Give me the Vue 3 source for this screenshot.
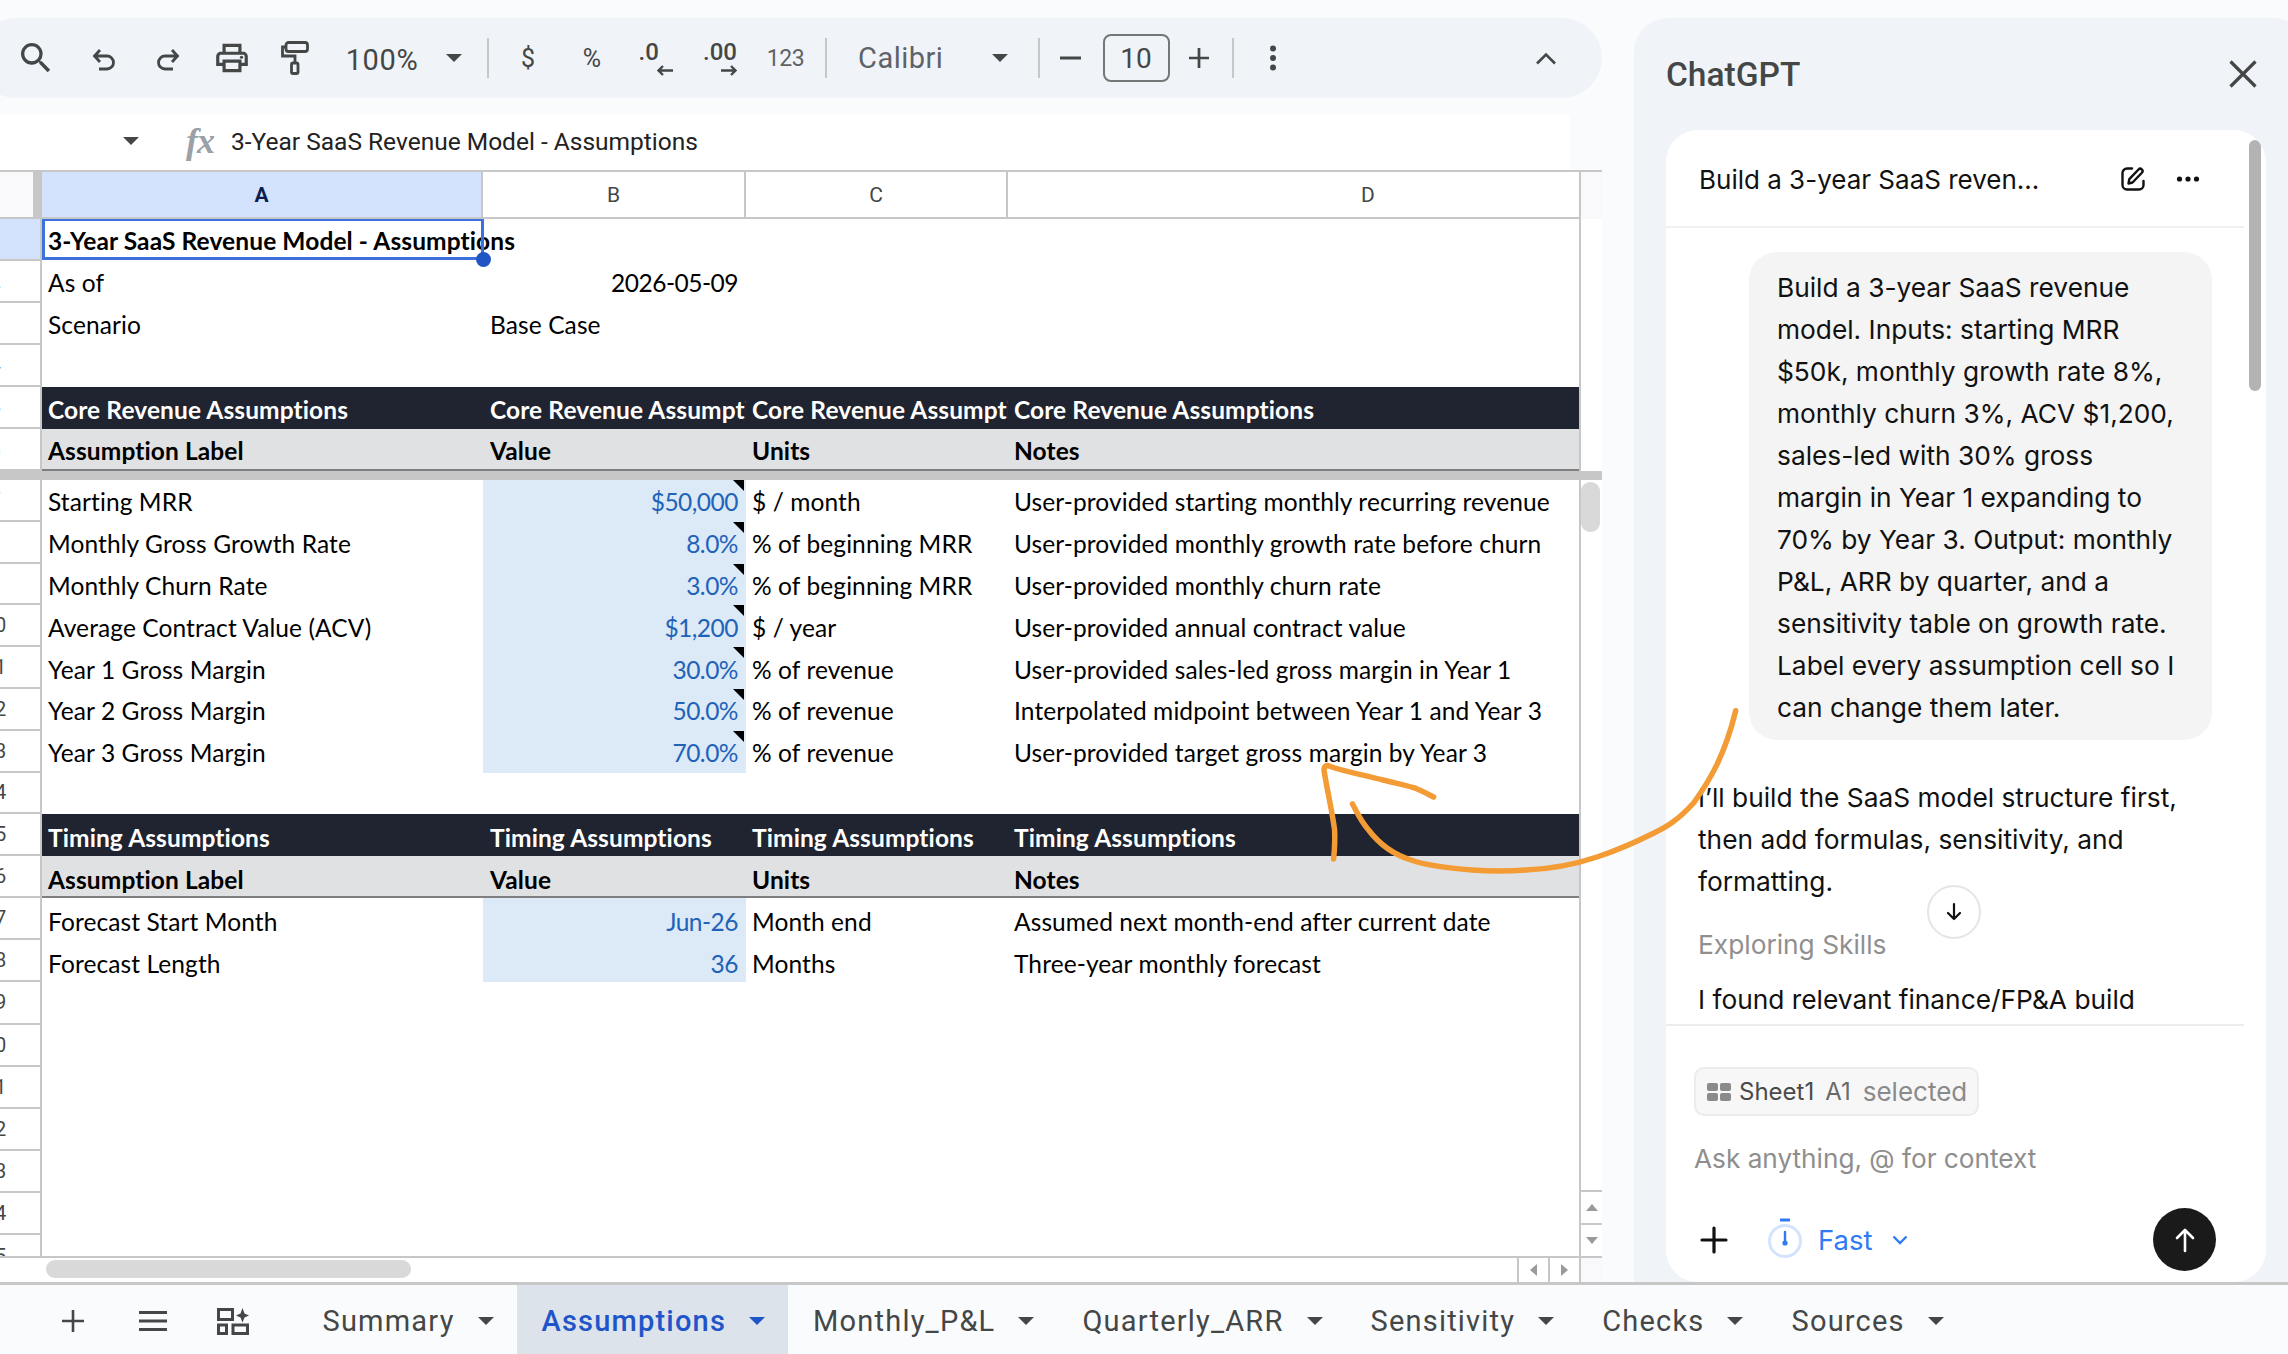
<script setup>
const tabs = [
  { name: 'Summary' },
  { name: 'Assumptions', active: true },
  { name: 'Monthly_P&L' },
  { name: 'Quarterly_ARR' },
  { name: 'Sensitivity' },
  { name: 'Checks' },
  { name: 'Sources' }
]

const columns = [
  { key: 'A', active: true },
  { key: 'B' },
  { key: 'C' },
  { key: 'D' }
]

const promptLines = [
  'Build a 3-year SaaS revenue',
  'model. Inputs: starting MRR',
  '$50k, monthly growth rate 8%,',
  'monthly churn 3%, ACV $1,200,',
  'sales-led with 30% gross',
  'margin in Year 1 expanding to',
  '70% by Year 3. Output: monthly',
  'P&L, ARR by quarter, and a',
  'sensitivity table on growth rate.',
  'Label every assumption cell so I',
  'can change them later.'
]

const replyLines = [
  'I’ll build the SaaS model structure first,',
  'then add formulas, sensitivity, and',
  'formatting.'
]

const sections = [
  {
    cls: 'frozen',
    rows: [
      { n: 1, a: '3-Year SaaS Revenue Model - Assumptions', type: 'title', selected: true },
      { n: 2, a: 'As of', b: '2026-05-09', num: true },
      { n: 3, a: 'Scenario', b: 'Base Case' },
      { n: 4 },
      { n: 5, a: 'Core Revenue Assumptions', b: 'Core Revenue Assumptions', c: 'Core Revenue Assumptions', d: 'Core Revenue Assumptions', type: 'band' },
      { n: 6, a: 'Assumption Label', b: 'Value', c: 'Units', d: 'Notes', type: 'head' }
    ]
  },
  {
    cls: 'body',
    rows: [
      { n: 7, a: 'Starting MRR', b: '$50,000', c: '$ / month', d: 'User-provided starting monthly recurring revenue', input: true, note: true },
      { n: 8, a: 'Monthly Gross Growth Rate', b: '8.0%', c: '% of beginning MRR', d: 'User-provided monthly growth rate before churn', input: true, note: true },
      { n: 9, a: 'Monthly Churn Rate', b: '3.0%', c: '% of beginning MRR', d: 'User-provided monthly churn rate', input: true, note: true },
      { n: 10, a: 'Average Contract Value (ACV)', b: '$1,200', c: '$ / year', d: 'User-provided annual contract value', input: true, note: true },
      { n: 11, a: 'Year 1 Gross Margin', b: '30.0%', c: '% of revenue', d: 'User-provided sales-led gross margin in Year 1', input: true, note: true },
      { n: 12, a: 'Year 2 Gross Margin', b: '50.0%', c: '% of revenue', d: 'Interpolated midpoint between Year 1 and Year 3', input: true, note: true },
      { n: 13, a: 'Year 3 Gross Margin', b: '70.0%', c: '% of revenue', d: 'User-provided target gross margin by Year 3', input: true, note: true },
      { n: 14 },
      { n: 15, a: 'Timing Assumptions', b: 'Timing Assumptions', c: 'Timing Assumptions', d: 'Timing Assumptions', type: 'band' },
      { n: 16, a: 'Assumption Label', b: 'Value', c: 'Units', d: 'Notes', type: 'head' }
    ]
  },
  {
    cls: 'tail',
    rows: [
      { n: 17, a: 'Forecast Start Month', b: 'Jun-26', c: 'Month end', d: 'Assumed next month-end after current date', input: true },
      { n: 18, a: 'Forecast Length', b: '36', c: 'Months', d: 'Three-year monthly forecast', input: true },
      { n: 19 }, { n: 20 }, { n: 21 }, { n: 22 }, { n: 23 }, { n: 24 }, { n: 25 }
    ]
  }
]
</script>

<template>
  <div class="app">
    <div class="main">
      <div class="sheet">
        <div class="toolbar">
          <span class="slot">
            <svg width="40" height="40" viewBox="0 0 24 24" fill="#444746"><path d="M15.5 14h-.79l-.28-.27A6.471 6.471 0 0 0 16 9.5 6.5 6.5 0 1 0 9.5 16c1.61 0 3.09-.59 4.23-1.57l.27.28v.79l5 4.99L20.49 19l-4.99-5zm-6 0C7.01 14 5 11.99 5 9.5S7.01 5 9.5 5 14 7.01 14 9.5 11.99 14 9.5 14z"/></svg>
          </span>
          <span class="slot down">
            <svg width="26" height="24" viewBox="0 0 26 24" fill="none" stroke="#444746" stroke-width="2.8"><path d="M9 2 3.5 8 9 14M3.5 8H16a6.5 6.5 0 0 1 0 13H8"/></svg>
          </span>
          <span class="slot down">
            <svg width="26" height="24" viewBox="0 0 26 24" fill="none" stroke="#444746" stroke-width="2.8"><path d="M17 2l5.5 6L17 14M22.5 8H10a6.5 6.5 0 0 0 0 13h8"/></svg>
          </span>
          <span class="slot">
            <svg width="38" height="38" viewBox="0 0 24 24" fill="#444746"><path d="M19 8h-1V3H6v5H5c-1.66 0-3 1.34-3 3v6h4v4h12v-4h4v-6c0-1.66-1.34-3-3-3zM8 5h8v3H8V5zm8 12v2H8v-4h8v2zm2-2v-2H6v2H4v-4c0-.55.45-1 1-1h14c.55 0 1 .45 1 1v4h-2z"/><circle cx="18" cy="11.5" r="1"/></svg>
          </span>
          <span class="slot">
            <svg width="28" height="34" viewBox="0 0 28 34" fill="none" stroke="#444746" stroke-width="2.8"><rect x="5" y="1.5" width="21.5" height="9" rx="2.5"/><path d="M5 6H1.5v9H14v7"/><rect x="10.5" y="22" width="6.5" height="10.5" rx="1.5"/></svg>
          </span>
          <span class="slot zoom-text">100%</span>
          <span class="slot"><i class="tri"></i></span>
          <span class="slot"><i class="sep"></i></span>
          <span class="slot glyph">$</span>
          <span class="slot glyph">%</span>
          <span class="slot">
            <span class="dec">
              <b>.0</b>
              <svg width="16" height="11" viewBox="0 0 16 11" fill="none" stroke="#444746" stroke-width="2.4"><path d="M6 1 1.5 5.5 6 10M1.5 5.5H16"/></svg>
            </span>
          </span>
          <span class="slot">
            <span class="dec">
              <b>.00</b>
              <svg width="16" height="11" viewBox="0 0 16 11" fill="none" stroke="#444746" stroke-width="2.4"><path d="M10 1l4.5 4.5L10 10M14.5 5.5H0"/></svg>
            </span>
          </span>
          <span class="slot num-fmt">123</span>
          <span class="slot"><i class="sep"></i></span>
          <span class="slot font-name">Calibri</span>
          <span class="slot"><i class="tri"></i></span>
          <span class="slot"><i class="sep"></i></span>
          <span class="slot">
            <svg width="22" height="22" viewBox="0 0 22 22" fill="#444746"><rect y="9.5" width="21" height="3"/></svg>
          </span>
          <span class="slot"><span class="size-box">10</span></span>
          <span class="slot">
            <svg width="22" height="22" viewBox="0 0 22 22" fill="#444746"><path d="M9.5 0h3v9.5H22v3h-9.5V22h-3v-9.5H0v-3h9.5z"/></svg>
          </span>
          <span class="slot"><i class="sep"></i></span>
          <span class="slot">
            <svg width="8" height="26" viewBox="0 0 8 26" fill="#444746"><circle cx="4" cy="3.5" r="3"/><circle cx="4" cy="13" r="3"/><circle cx="4" cy="22.5" r="3"/></svg>
          </span>
          <span></span>
          <span class="slot">
            <svg width="22" height="13" viewBox="0 0 22 13" fill="none" stroke="#444746" stroke-width="2.6"><path d="M2 11.5 11 2.5l9 9"/></svg>
          </span>
        </div>

        <div class="formula-bar">
          <span class="name-box">A1</span>
          <i class="tri name-tri"></i>
          <span class="fx">fx</span>
          <span class="formula-text">3-Year SaaS Revenue Model - Assumptions</span>
        </div>

        <div class="grid-wrap">
          <div class="grid">
            <div class="col-heads">
              <div class="corner"><i></i></div>
              <div
                v-for="col in columns"
                :key="col.key"
                class="col-head"
                :class="['col-' + col.key, { active: col.active }]"
              >{{ col.key }}</div>
            </div>

            <div class="rows">
              <div v-for="sec in sections" :key="sec.cls" :class="sec.cls">
                <div v-for="row in sec.rows" :key="row.n" class="row" :class="row.type">
                  <div class="row-num" :class="{ active: row.selected }"><span>{{ row.n }}</span></div>
                  <div class="cell col-A">
                    {{ row.a }}
                    <div v-if="row.selected" class="selection"><i></i></div>
                  </div>
                  <div class="cell col-B" :class="{ input: row.input, right: row.num || row.input }">
                    {{ row.b }}
                    <i v-if="row.note" class="note"></i>
                  </div>
                  <div class="cell col-C">{{ row.c }}</div>
                  <div class="cell col-D">{{ row.d }}</div>
                </div>
              </div>
            </div>

            <div class="hscroll">
              <div class="hs-track"><div class="hs-thumb"></div></div>
              <div class="hs-btn"><i class="arr-left"></i></div>
              <div class="hs-btn"><i class="arr-right"></i></div>
            </div>
          </div>

          <div class="vscroll">
            <div class="vs-head"></div>
            <div class="vs-frozen"></div>
            <div class="vs-bar"></div>
            <div class="vs-track"><div class="vs-thumb"></div></div>
            <div class="vs-btn"><i class="arr-up"></i></div>
            <div class="vs-btn"><i class="arr-down"></i></div>
            <div class="vs-end"></div>
          </div>
        </div>
      </div>

      <aside class="panel">
        <div class="panel-head">
          <span class="panel-title">ChatGPT</span>
          <svg width="30" height="30" viewBox="0 0 30 30" fill="none" stroke="#444746" stroke-width="3.2"><path d="M2.5 2.5l25 25M27.5 2.5l-25 25"/></svg>
        </div>

        <div class="card">
          <div class="card-scroll"></div>
          <div class="card-head">
            <span class="card-title">Build a 3-year SaaS reven...</span>
            <svg class="edit-icon" width="26" height="26" viewBox="0 0 26 26" fill="none" stroke="#111" stroke-width="2.4" stroke-linecap="round" stroke-linejoin="round"><path d="M12 2.5H7A4.5 4.5 0 0 0 2.5 7v12A4.5 4.5 0 0 0 7 23.5h12a4.5 4.5 0 0 0 4.5-4.5v-4"/><path d="M8.5 17.5l.8-4.300L18.5 3.5a2.3 2.3 0 0 1 3.4 3.200l-9.400 9.800z"/></svg>
            <svg class="dots-icon" width="24" height="6" viewBox="0 0 24 6" fill="#111"><circle cx="3.5" cy="3" r="2.6"/><circle cx="12" cy="3" r="2.6"/><circle cx="20.5" cy="3" r="2.6"/></svg>
          </div>

          <div class="messages">
            <div class="bubble">
              <div v-for="line in promptLines" :key="line">{{ line }}</div>
            </div>
            <div class="reply">
              <div v-for="line in replyLines" :key="line">{{ line }}</div>
            </div>
            <div class="exploring">Exploring Skills</div>
            <div class="reply found">I found relevant finance/FP&amp;A build</div>
          </div>

          <button class="to-bottom">
            <svg width="22" height="22" viewBox="0 0 22 22" fill="none" stroke="#111" stroke-width="2.2" stroke-linecap="round" stroke-linejoin="round"><path d="M11 3v15M5 12l6 6 6-6"/></svg>
          </button>

          <div class="composer">
            <div class="chip">
              <svg width="24" height="18" viewBox="0 0 24 18" fill="#8a8a8a"><rect width="11" height="8" rx="2"/><rect x="13" width="11" height="8" rx="2"/><rect y="10" width="11" height="8" rx="2"/><rect x="13" y="10" width="11" height="8" rx="2"/></svg>
              <span class="chip-name">Sheet1</span>
              <span class="chip-cell">A1</span>
              <span class="chip-sel">selected</span>
            </div>
            <div class="placeholder">Ask anything, @ for context</div>
            <div class="composer-row">
              <svg class="plus" width="28" height="28" viewBox="0 0 28 28" fill="none" stroke="#111" stroke-width="3.2" stroke-linecap="round"><path d="M14 2v24M2 14h24"/></svg>
              <svg class="watch" width="36" height="40" viewBox="0 0 36 40" fill="none"><circle cx="18" cy="23" r="15.5" stroke="#d3e3fd" stroke-width="3"/><path d="M13 2h10" stroke="#2f7bf6" stroke-width="3"/><path d="M18 14v10" stroke="#2f7bf6" stroke-width="2.4" stroke-linecap="round"/><circle cx="18" cy="25" r="2.6" fill="#2f7bf6"/></svg>
              <span class="model">Fast</span>
              <svg class="model-chev" width="16" height="10" viewBox="0 0 16 10" fill="none" stroke="#2f7bf6" stroke-width="2.4"><path d="M1.5 1.5 8 8l6.5-6.5"/></svg>
              <button class="send">
                <svg width="24" height="26" viewBox="0 0 24 26" fill="none" stroke="#fff" stroke-width="2.6" stroke-linecap="round" stroke-linejoin="round"><path d="M12 24V3M4 11l8-8 8 8"/></svg>
              </button>
            </div>
          </div>
        </div>
      </aside>
    </div>

    <div class="tabbar">
      <svg class="tb-add" width="22" height="22" viewBox="0 0 22 22" fill="#444746"><path d="M9.7 0h2.6v9.7H22v2.6h-9.7V22H9.7v-9.7H0V9.7h9.7z"/></svg>
      <svg class="tb-list" width="28" height="20" viewBox="0 0 28 20" fill="#444746"><rect width="28" height="3"/><rect y="8.5" width="28" height="3"/><rect y="17" width="28" height="3"/></svg>
      <svg class="tb-grid" width="32" height="27" viewBox="0 0 32 27" fill="none" stroke="#444746" stroke-width="3"><rect x="1.5" y="1.5" width="14" height="10"/><rect x="1.5" y="17" width="8" height="8.5"/><rect x="16" y="17" width="14.5" height="8.5"/><path d="M25.5 0l2 5.5 4.5 2-4.5 2-2 5-2-5-4.500-2 4.500-2z" fill="#444746" stroke="none"/></svg>
      <div class="tabs">
        <div v-for="tab in tabs" :key="tab.name" class="tab" :class="{ active: tab.active }">
          <span>{{ tab.name }}</span>
          <i class="tri"></i>
        </div>
      </div>
    </div>

    <svg class="scribble" width="2288" height="1354" viewBox="0 0 2288 1354" fill="none" stroke="#f39c35" stroke-width="5.5" stroke-linecap="round" stroke-linejoin="round">
      <path d="M1735.7 710.7C1725 755 1710 780 1693.6 803 1678 820 1668 826 1654 833 1630 845 1612 852 1597 857 1570 866 1550 869 1526 870 1500 872 1485 871 1472 870 1445 868 1425 865 1411 860 1395 855 1380 845 1368.6 830 1360 820 1357 812 1352.5 804"/>
      <path d="M1333.6 859C1335 845 1335 838 1334.6 830 1332 810 1327 790 1324 770 1324 766 1327 765 1329 766 1345 772 1365 775 1383 780 1395 783 1405 785 1415 788 1422 791 1428 794 1433.6 797"/>
    </svg>
  </div>
</template>

<style>
html, body {
  margin: 0;
  background: #f9fbfd;
}
</style>

<style scoped>
.app {
  position: relative;
  width: 2288px;
  height: 1354px;
  overflow: hidden;
  display: flex;
  flex-direction: column;
  background: #f9fbfd;
  font-family: Roboto, "Noto Sans", sans-serif;
  color: #444746;
}

.main {
  height: 1282px;
  display: flex;
  padding-top: 18px;
  box-sizing: border-box;
}

.sheet {
  width: 1602px;
  flex-shrink: 0;
  display: flex;
  flex-direction: column;
}

/* toolbar */
.toolbar {
  width: 1626px;
  height: 80px;
  margin-left: -24px;
  padding-left: 24px;
  padding-right: 36px;
  box-sizing: border-box;
  border-radius: 40px;
  background: #f0f4f9;
  display: grid;
  grid-template-columns: 71px 66px 62px 66px 59px 116px 28px 40px 40px 88px 39px 90px 41px 40px 133px 41px 38px 25px 106px 20px 48px 32px 1fr 40px;
  align-items: center;
}

.slot {
  display: flex;
  align-items: center;
  justify-content: center;
}

.slot.down {
  padding-top: 4px;
}

.tri {
  display: inline-block;
  width: 0;
  height: 0;
  border-left: 8px solid transparent;
  border-right: 8px solid transparent;
  border-top: 8px solid #444746;
}

.sep {
  display: block;
  width: 2px;
  height: 40px;
  background: #c7c7c7;
}

.zoom-text {
  font-size: 29px;
  letter-spacing: 0.6px;
  padding-top: 3px;
}

.glyph {
  font-size: 25px;
}

.dec {
  width: 34px;
  display: flex;
  flex-direction: column;
}

.dec b {
  font-weight: 500;
  font-size: 24px;
  line-height: 24px;
}

.dec svg {
  align-self: flex-end;
  margin-top: 1px;
}

.num-fmt {
  font-size: 23px;
  letter-spacing: -0.4px;
  color: #5f6368;
}

.font-name {
  justify-content: flex-start;
  padding-left: 12px;
  font-size: 29px;
  letter-spacing: 0.5px;
  color: #5f6368;
}

.size-box {
  width: 67px;
  height: 48px;
  box-sizing: border-box;
  border: 2px solid #747775;
  border-radius: 8px;
  display: flex;
  align-items: center;
  justify-content: center;
  font-size: 28px;
  color: #444746;
}

/* formula bar */
.formula-bar {
  width: 1570px;
  height: 56px;
  margin-top: 16px;
  padding-bottom: 2px;
  box-sizing: border-box;
  background: #fff;
  display: flex;
  align-items: center;
  overflow: hidden;
  flex-shrink: 0;
}

.name-box {
  margin-left: -31px;
  width: 35px;
  text-align: right;
  font-size: 25px;
  color: #111;
}

.name-tri {
  margin-left: 119px;
}

.fx {
  margin-left: 47px;
  width: 45px;
  font-family: "Liberation Serif", serif;
  font-style: italic;
  font-weight: 700;
  font-size: 36px;
  color: #9aa0a6;
  letter-spacing: -1px;
}

.formula-text {
  font-size: 24.5px;
  color: #222;
}

/* grid */
.grid-wrap {
  flex: 1;
  min-height: 0;
  display: flex;
  background: #fff;
}

.grid {
  width: 1579px;
  display: flex;
  flex-direction: column;
  overflow: hidden;
}

.col-heads {
  display: flex;
  height: 49px;
  box-sizing: border-box;
  border-top: 2px solid #c7c7c7;
  border-bottom: 2px solid #c7c7c7;
  flex-shrink: 0;
}

.corner {
  width: 42px;
  background: #f9f9fb;
  display: flex;
  justify-content: flex-end;
}

.corner i {
  display: block;
  width: 9px;
  background: #c7c7c7;
}

.col-head {
  display: flex;
  align-items: center;
  justify-content: center;
  box-sizing: border-box;
  border-right: 2px solid #c7c7c7;
  font-size: 21px;
  color: #444746;
}

.col-head.col-D {
  border-right: 0;
  padding-left: 149px;
}

.col-head.active {
  background: #d3e3fd;
  color: #0b1f4f;
  font-weight: 700;
}

.col-A { width: 441px; }
.col-B { width: 263px; }
.col-C { width: 262px; }
.col-D { width: 571px; }

.rows {
  flex: 1;
  min-height: 0;
  overflow: hidden;
}

.frozen {
  border-bottom: 9px solid #c7c7c7;
}

.frozen .row { height: 42px; }
.body .row { height: 41.8px; }
.tail .row { height: 42.2px; }

.row {
  display: flex;
  box-sizing: border-box;
}

.row-num {
  width: 42px;
  flex-shrink: 0;
  box-sizing: border-box;
  border-right: 2px solid #c7c7c7;
  border-bottom: 2px solid #c7c7c7;
  background: #fff;
  display: flex;
  align-items: center;
  overflow: hidden;
  font-size: 20px;
  color: #444746;
}

.row-num.active {
  background: #d3e3fd;
}

.row-num span {
  flex: 0 0 90px;
  margin-left: -50px;
  text-align: center;
}

/* sheet cells are bottom aligned, so the text sits a little low in the row */
.cell {
  position: relative;
  flex-shrink: 0;
  box-sizing: border-box;
  display: flex;
  align-items: center;
  padding: 1px 6px 0;
  white-space: nowrap;
  font-family: Lato, "Open Sans", sans-serif;
  font-size: 24.5px;
  letter-spacing: 0.1px;
  color: #000;
}

.body .cell {
  padding-top: 2px;
}

.tail .cell {
  padding-top: 4px;
}

.frozen .band .cell,
.frozen .head .cell {
  padding-top: 3px;
}

.body .band .cell {
  padding-top: 5px;
}

.body .head .cell {
  padding-top: 7px;
}

.cell.col-B {
  padding-left: 7px;
  padding-right: 8px;
}

.cell.col-C {
  padding-left: 6px;
}

.cell.col-D {
  padding-left: 6px;
}

.cell.right {
  justify-content: flex-end;
  letter-spacing: -0.5px;
}

.cell.input {
  background: #dce9f7;
  color: #1f63b8;
}

.note {
  position: absolute;
  top: 0;
  right: 2px;
  width: 0;
  height: 0;
  border-top: 11px solid #000;
  border-left: 11px solid transparent;
}

.title .cell,
.band .cell,
.head .cell {
  font-weight: 700;
}

.band .cell {
  background: #1f2430;
  color: #fff;
}

.band .col-B,
.band .col-C {
  overflow: hidden;
}

.head .cell {
  background: #e0e1e3;
  border-bottom: 2px solid #7f7f7f;
}

.selection {
  position: absolute;
  inset: -1px -1px 1px 0;
  box-sizing: border-box;
  border: 3px solid #3d6fdd;
  pointer-events: none;
}

.selection i {
  position: absolute;
  right: -10px;
  bottom: -10px;
  width: 15px;
  height: 15px;
  border-radius: 50%;
  background: #2255c4;
}

.hscroll {
  height: 26px;
  flex-shrink: 0;
  display: flex;
  border-top: 2px solid #c7c7c7;
  box-sizing: border-box;
  background: #fff;
}

.hs-track {
  flex: 1;
  padding: 2px 0 2px 46px;
  box-sizing: border-box;
}

.hs-thumb {
  width: 365px;
  height: 18px;
  border-radius: 9px;
  background: #d9d9d9;
}

.hs-btn {
  width: 31px;
  box-sizing: border-box;
  border-left: 2px solid #c7c7c7;
  display: flex;
  align-items: center;
  justify-content: center;
}

.arr-left, .arr-right, .arr-up, .arr-down {
  display: block;
  width: 0;
  height: 0;
}

.arr-left {
  border-top: 6px solid transparent;
  border-bottom: 6px solid transparent;
  border-right: 7px solid #9a9a9a;
}

.arr-right {
  border-top: 6px solid transparent;
  border-bottom: 6px solid transparent;
  border-left: 7px solid #9a9a9a;
}

.arr-up {
  border-left: 6px solid transparent;
  border-right: 6px solid transparent;
  border-bottom: 7px solid #9a9a9a;
}

.arr-down {
  border-left: 6px solid transparent;
  border-right: 6px solid transparent;
  border-top: 7px solid #9a9a9a;
}

.vscroll {
  width: 23px;
  flex-shrink: 0;
  display: flex;
  flex-direction: column;
  box-sizing: border-box;
  border-left: 2px solid #c7c7c7;
  background: #fff;
}

.vs-head {
  height: 49px;
  box-sizing: border-box;
  border-top: 2px solid #c7c7c7;
  background: #f9f9fb;
}

.vs-frozen {
  height: 252px;
}

.vs-bar {
  height: 9px;
  margin-left: -2px;
  background: #c7c7c7;
}

.vs-track {
  flex: 1;
  padding: 2px 2px 0 0;
}

.vs-thumb {
  height: 50px;
  border-radius: 9px;
  background: #d9d9d9;
}

.vs-btn {
  height: 33px;
  box-sizing: border-box;
  border-top: 2px solid #c7c7c7;
  display: flex;
  align-items: center;
  justify-content: center;
}

.vs-end {
  height: 26px;
  box-sizing: border-box;
  border-top: 2px solid #c7c7c7;
  background: #f9f9fb;
}

/* chat panel */
.panel {
  flex: 1;
  margin-left: 32px;
  display: flex;
  flex-direction: column;
  background: #f0f4f9;
  border-top-left-radius: 34px;
  border-top-right-radius: 34px;
  margin-right: -20px;
  padding-right: 42px;
  min-height: 0;
}

.panel-head {
  height: 112px;
  padding: 0 8px 0 32px;
  display: flex;
  align-items: center;
  justify-content: space-between;
  flex-shrink: 0;
}

.panel-title {
  font-size: 33.5px;
  font-weight: 500;
  color: #444746;
}

.card {
  position: relative;
  flex: 1;
  min-height: 0;
  margin-left: 32px;
  border-radius: 32px;
  background: #fff;
  display: flex;
  flex-direction: column;
  overflow: hidden;
  font-family: Inter, Roboto, sans-serif;
  color: #111;
}

.card-scroll {
  position: absolute;
  top: 10px;
  right: 5px;
  width: 12px;
  height: 251px;
  border-radius: 6px;
  background: #b3b3b3;
}

.card-head {
  height: 98px;
  margin-right: 22px;
  padding: 2px 0 0 33px;
  box-sizing: border-box;
  border-bottom: 2px solid #f0f0f0;
  display: flex;
  align-items: center;
  flex-shrink: 0;
}

.card-title {
  font-size: 26px;
  flex: 1;
}

.dots-icon {
  margin: 0 44px 0 30px;
}

.messages {
  height: 796px;
  flex-shrink: 0;
  padding: 24px 0 0 32px;
  box-sizing: border-box;
  overflow: hidden;
  font-size: 26.3px;
  line-height: 42px;
}

.bubble {
  margin-left: 51px;
  width: 463px;
  box-sizing: border-box;
  padding: 15px 0 11px 28px;
  border-radius: 28px;
  background: #f4f4f4;
  white-space: nowrap;
}

.reply {
  margin-top: 37px;
  white-space: nowrap;
}

.exploring {
  margin-top: 21px;
  color: #8f8f8f;
}

.reply.found {
  margin-top: 13px;
}

.to-bottom {
  position: absolute;
  left: 261px;
  top: 755px;
  width: 54px;
  height: 54px;
  padding: 0;
  border-radius: 50%;
  border: 2px solid #e5e5e5;
  background: #fff;
  display: flex;
  align-items: center;
  justify-content: center;
}

.composer {
  flex: 1;
  border-top: 2px solid #ececec;
  margin-right: 22px;
  padding-left: 29px;
}

.chip {
  margin-top: 41px;
  width: 285px;
  height: 49px;
  margin-left: -1px;
  box-sizing: border-box;
  border: 2px solid #ececec;
  border-radius: 10px;
  background: #f7f7f7;
  padding-left: 11px;
  display: flex;
  align-items: center;
  gap: 8px;
  font-size: 24px;
  white-space: nowrap;
}

.chip-name {
  color: #4a4a4a;
}

.chip-cell {
  color: #6a6a6a;
  margin-left: 3px;
}

.chip-sel {
  color: #8a8a8a;
  font-size: 26px;
  margin-left: 4px;
}

.placeholder {
  margin-top: 23px;
  margin-left: -1px;
  height: 40px;
  line-height: 40px;
  font-size: 26.2px;
  color: #8e8e8e;
}

.composer-row {
  margin-top: 29px;
  height: 63px;
  margin-right: 28px;
  display: flex;
  align-items: center;
}

.plus {
  margin-left: 5px;
}

.watch {
  margin-left: 39px;
  margin-bottom: 4px;
}

.model {
  margin-left: 15px;
  font-size: 27.5px;
  color: #2f7bf6;
}

.model-chev {
  margin-left: 19px;
}

.send {
  margin-left: auto;
  width: 63px;
  height: 63px;
  padding: 0;
  border: 0;
  border-radius: 50%;
  background: #1a1a1a;
  display: flex;
  align-items: center;
  justify-content: center;
}

/* tabs */
.tabbar {
  flex: 1;
  box-sizing: border-box;
  border-top: 3px solid #c7c7c7;
  padding-top: 3px;
  background: #f9fbfd;
  display: flex;
  align-items: center;
  position: relative;
  z-index: 1;
}

.tb-add {
  margin-left: 62px;
}

.tb-list {
  margin-left: 55px;
}

.tb-grid {
  margin-left: 50px;
}

.tabs {
  margin-left: 48.5px;
  align-self: stretch;
  margin-top: -3px;
  display: flex;
}

.tab {
  display: flex;
  align-items: center;
  padding: 3px 23px 0 25px;
  gap: 23px;
  font-size: 29px;
  letter-spacing: 1.2px;
  color: #444746;
  white-space: nowrap;
}

.tab.active {
  background: #dde3ea;
  color: #1f55c9;
  font-weight: 500;
}

.tab.active .tri {
  border-top-color: #1f55c9;
}

.scribble {
  position: absolute;
  inset: 0;
  z-index: 2;
  pointer-events: none;
}
</style>
